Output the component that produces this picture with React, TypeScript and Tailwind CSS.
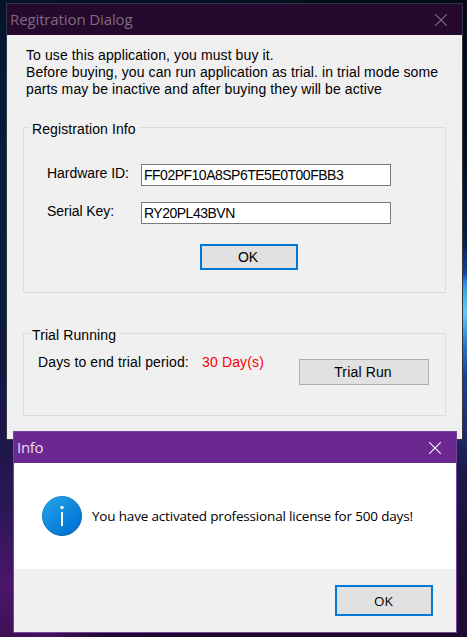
import React from "react";

const Cross = ({ color }: { color: string }) => (
  <svg width="12" height="12" viewBox="0 0 12 12" stroke={color} strokeWidth="1.1" fill="none">
    <path d="M0.3 0.3 11.7 11.7M11.7 0.3 0.3 11.7" />
  </svg>
);

const InfoIcon = () => (
  <svg width="40" height="40" viewBox="0 0 40 40">
    <defs>
      <linearGradient id="disc" x1="0.15" y1="0.1" x2="0.8" y2="0.9">
        <stop offset="0" stopColor="#1e9fe6" />
        <stop offset="1" stopColor="#0072d4" />
      </linearGradient>
      <linearGradient id="rim" x1="0.2" y1="0" x2="0.8" y2="1">
        <stop offset="0" stopColor="#1a8cd0" />
        <stop offset="1" stopColor="#0a5cab" />
      </linearGradient>
    </defs>
    <circle cx="20" cy="20" r="19.5" fill="url(#disc)" stroke="url(#rim)" />
    <circle cx="20" cy="11.5" r="1.7" fill="#fff" />
    <rect x="19" y="16" width="2" height="14" fill="#fff" />
  </svg>
);

const Group = ({ title, className, children }: { title: string; className: string; children: React.ReactNode }) => (
  <section className={`border border-[#dcdcdc] ${className}`}>
    <h2 className="-mt-[7px] ml-[6px] h-4 w-fit bg-[#f0f0f0] pl-[2px] pr-[3px] text-[14px] leading-4 tracking-[0.1px]">{title}</h2>
    {children}
  </section>
);

const Field = ({ label, value }: { label: string; value: string }) => (
  <div className="flex h-[22px]">
    <span className="w-[94px] leading-[18px] tracking-[-0.05px]">{label}</span>
    <span className="h-[22px] w-[250px] border border-[#7a7a7a] bg-white pl-[2px] text-[14px] leading-[21px] tracking-[-0.5px]">{value}</span>
  </div>
);

export default function App() {
  return (
    <main className="relative h-[637px] w-[467px] overflow-hidden bg-[#120b2c] text-black">
      <div className="flex h-full justify-between bg-[linear-gradient(90deg,#04142c,#020c18)]">
        <div className="mt-[4px] w-[14px] bg-[linear-gradient(180deg,#04142c_0%,#071c3b_20%,#0d1b40_50%,#1d1648_68%,#2c1757_80%,#4b166c_92%,#3f1055_100%)]" />
        <div className="mt-auto h-[4px] grow bg-[linear-gradient(90deg,#3f1055_0%,#431060_8%,#200a30_20%,#190a28_100%)]" />
        <div className="w-[11px] bg-[linear-gradient(180deg,#030a15_0%,#030e20_25%,#081f48_38%,#15459c_43%,#2f86f2_44.3%,#40aedd_46%,#66ccf5_49%,#2c78cf_54%,#1c4294_59%,#20306f_66%,#1b1a4a_74%,#1c1038_86%,#1f0a30_100%)]" />
      </div>

      <div className="absolute left-[6px] top-[3px] flex h-[437px] w-[457px] flex-col border border-[#333642] bg-[#f0f0f0] font-['Liberation_Sans',Arial,sans-serif] text-[14px]">
        <header className="flex h-[31px] shrink-0 items-center justify-between bg-[#25092e] pl-[3px] pr-[15px] font-['Open_Sans',sans-serif] text-[15px] tracking-[-0.12px] text-[#80697f]">
          <span>Regitration Dialog</span>
          <Cross color="#86708a" />
        </header>
        <div className="flex flex-col px-4 pt-[12px]">
          <p className="h-[80px] whitespace-nowrap pl-[3px] leading-[17px] tracking-[0.1px]">
            To use this application, you must buy it.<br />
            Before buying, you can run application as trial. in trial mode some<br />
            parts may be inactive and after buying they will be active
          </p>
          <Group title="Registration Info" className="h-[166px] w-[423px]">
            <div className="flex flex-col gap-4 pl-[23px] pt-[27px]">
              <Field label="Hardware ID:" value="FF02PF10A8SP6TE5E0T00FBB3" />
              <Field label="Serial Key:" value="RY20PL43BVN" />
            </div>
            <button className="ml-[176px] mt-5 block h-[26px] w-[98px] border-2 border-[#0078d7] bg-[#e1e1e1] pr-[2px] leading-[22px]">OK</button>
          </Group>
          <Group title="Trial Running" className="mt-10 h-[83px] w-[423px]">
            <div className="flex pl-[14px] pt-[10px]">
              <span className="w-[164px] leading-[19px] tracking-[0.12px]">Days to end trial period:</span>
              <span className="w-[97px] leading-[19px] tracking-[0.15px] text-[#ff0000]">30 Day(s)</span>
              <button className="mt-[6px] h-[26px] w-[130px] border border-[#adadad] bg-[#e1e1e1] pr-[2px] leading-[24px] tracking-[0.15px]">Trial Run</button>
            </div>
          </Group>
        </div>
      </div>

      <div className="absolute left-[13px] top-[431px] flex h-[202px] w-[444px] flex-col border border-[#76449a] bg-white font-['Open_Sans',sans-serif] text-[13.5px]">
        <header className="flex h-[31px] shrink-0 items-center justify-between bg-[#6c2891] pl-[3px] pr-[15px] text-[15px] tracking-[-0.3px] text-[#e8dcf0]">
          <span>Info</span>
          <Cross color="#ffffff" />
        </header>
        <div className="flex h-[106px] items-center gap-[10px] pl-7">
          <InfoIcon />
          <p className="whitespace-nowrap pt-px tracking-[-0.18px]">You have activated professional license for 500 days!</p>
        </div>
        <footer className="flex grow justify-end bg-[#f0f0f0] pr-[23px] pt-4">
          <button className="h-[31px] w-[98px] border-2 border-[#0078d7] bg-[#e1e1e1] pt-px pr-px">OK</button>
        </footer>
      </div>
    </main>
  );
}
